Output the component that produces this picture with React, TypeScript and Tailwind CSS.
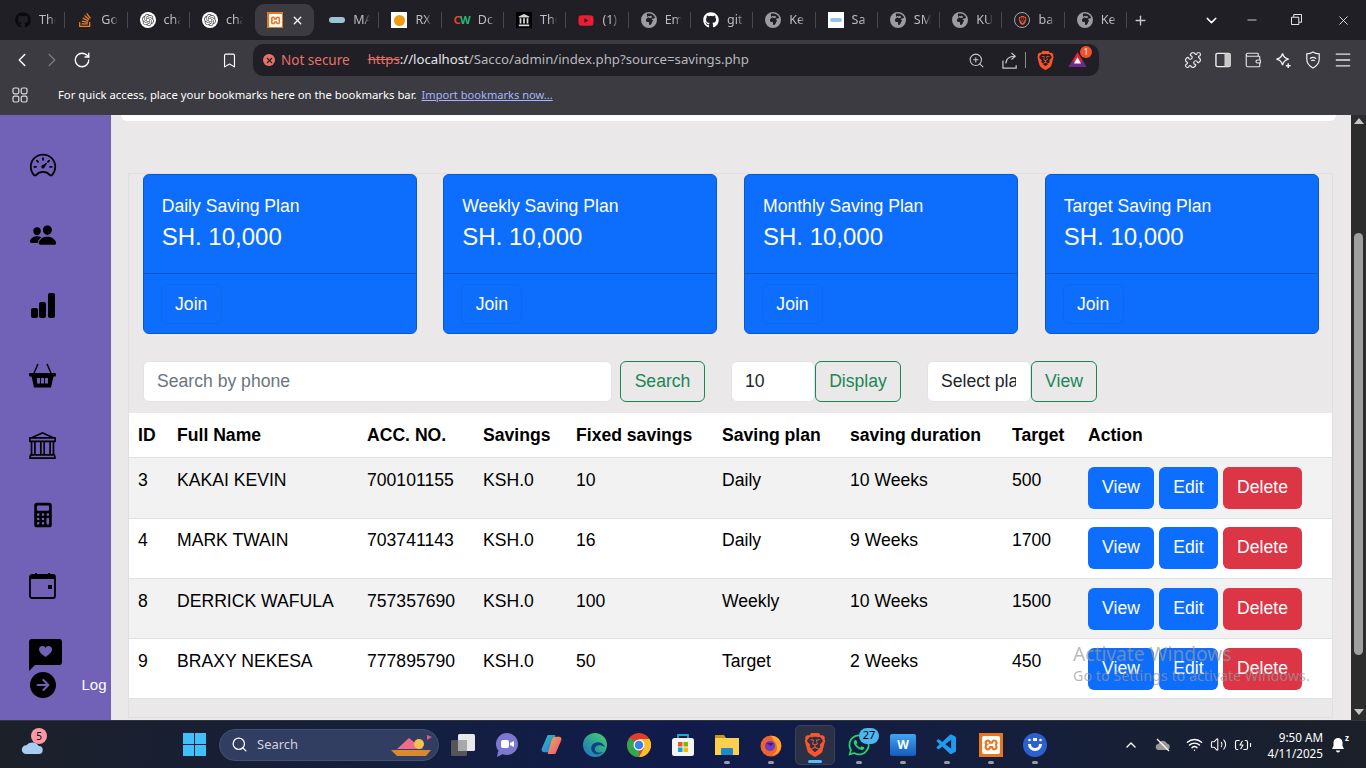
import React from "react";
import { ChevronLeft, ChevronRight, RotateCw, Bookmark, ZoomIn, Puzzle, Wallet, Menu, Plus, X, ChevronDown, Minus, Search, ChevronUp, Wifi, Volume2, BatteryCharging } from "lucide-react";
import { FaGithub, FaStackOverflow, FaYoutube, FaWhatsapp } from "react-icons/fa";
import { FaEarthAfrica } from "react-icons/fa6";
import { SiOpenai, SiBrave, SiXampp } from "react-icons/si";
import { VscVscode } from "react-icons/vsc";
import { IoSpeedometerOutline, IoPeople, IoCalculator, IoArrowForwardCircle } from "react-icons/io5";
import { BsBank } from "react-icons/bs";

const xamppTile = (
  <span className="flex h-4 w-4 items-center justify-center bg-[#e8761f] text-white"><SiXampp size={13} /></span>
);
const globe = <FaEarthAfrica size={16} className="text-[#9b9ba0]" />;

const tabs: { icon: React.ReactNode; label: string; active?: boolean }[] = [
  { icon: <FaGithub size={16} className="text-[#0b0b0d]" />, label: "The" },
  { icon: <FaStackOverflow size={16} className="text-[#f48024]" />, label: "Go" },
  { icon: <span className="flex h-4 w-4 items-center justify-center rounded-full bg-white text-[#555]"><SiOpenai size={12} /></span>, label: "cha" },
  { icon: <span className="flex h-4 w-4 items-center justify-center rounded-full bg-white text-[#555]"><SiOpenai size={12} /></span>, label: "cha" },
  { icon: xamppTile, label: "", active: true },
  { icon: <span className="h-[6px] w-4 rounded-sm bg-[#9cc3d6]" />, label: "MA" },
  { icon: <span className="flex h-4 w-4 items-center justify-center bg-white"><span className="h-[11px] w-[11px] rounded-full bg-[#ee9a12]" /></span>, label: "RX" },
  { icon: <span className="text-[11px] font-bold tracking-tighter"><span className="text-[#f0431f]">C</span><span className="text-[#25b872]">W</span></span>, label: "Dc" },
  {
    icon: (
      <span className="flex h-4 w-4 items-center justify-center bg-black">
        <svg viewBox="0 0 16 16" className="h-[14px] w-[14px]" fill="#d8d8d8"><path d="M8 1 14 4v1H2V4zM3 6h2v6H3zM7 6h2v6H7zM11 6h2v6h-2zM2 13h12v2H2z" /></svg>
      </span>
    ),
    label: "The",
  },
  { icon: <FaYoutube size={17} className="text-[#ee1c33]" />, label: "(1)" },
  { icon: globe, label: "Em" },
  { icon: <FaGithub size={16} className="text-white" />, label: "git" },
  { icon: globe, label: "Ke" },
  { icon: <span className="flex h-4 w-4 items-center justify-center bg-white"><span className="h-[4px] w-[12px] rounded-sm bg-[#9ec1e8]" /></span>, label: "Sa" },
  { icon: globe, label: "SM" },
  { icon: globe, label: "KU" },
  { icon: <span className="flex h-4 w-4 items-center justify-center rounded-full border border-[#aaa] text-[#e8553a]"><SiBrave size={9} /></span>, label: "ba" },
  { icon: globe, label: "Ke" },
];

function TabStrip() {
  return (
    <div className="flex h-[40px] items-start bg-[#1f1f25] pl-[3px] pt-[4px]">
      {tabs.map((t, i) =>
        t.active ? (
          <div key={i} className="mx-[3px] flex h-[32px] w-[59px] shrink-0 items-center rounded-[9px] bg-[#3b3b41] pl-[12px]">
            {t.icon}
            <X size={13} strokeWidth={2.4} className="ml-[8px] text-white" />
          </div>
        ) : (
          <div key={i} className="flex h-[32px] w-[62.3px] shrink-0 items-center pl-[12px] text-[12.5px] text-[#bdbdc1]">
            <span className="flex w-4 shrink-0 justify-center">{t.icon}</span>
            <span className="ml-[8px] w-[17px] overflow-hidden whitespace-nowrap [mask-image:linear-gradient(to_right,black_60%,transparent)]">{t.label}</span>
            <span className={i === 3 || i === 4 ? "hidden" : "ml-auto h-4 w-px bg-[#47474d]"} />
          </div>
        )
      )}
      <Plus size={15} strokeWidth={2.2} className="ml-[6px] mt-[9px] shrink-0 text-[#c8c8cc]" />
      <ChevronDown size={17} className="ml-[55px] mt-[8px] shrink-0 text-white" />
      <Minus size={14} strokeWidth={1.3} className="ml-[25px] mt-[9px] shrink-0 text-white" />
      <svg viewBox="0 0 12 12" className="ml-[32px] mt-[10px] h-[11px] w-[11px] shrink-0" fill="none" stroke="white"><path d="M.5 3.5h8v8h-8zM3 3V.5h8.5V9H9" /></svg>
      <X size={15} strokeWidth={1.3} className="ml-[34px] mt-[9px] shrink-0 text-white" />
    </div>
  );
}

function Toolbar() {
  return (
    <div className="flex h-[40px] items-center bg-[#3b3b41] text-[#e6e6e8]">
      <ChevronLeft size={22} strokeWidth={1.6} className="ml-[11px] text-white" />
      <ChevronRight size={22} strokeWidth={1.6} className="ml-[8px] text-[#77777c]" />
      <RotateCw size={18} strokeWidth={1.8} className="ml-[10px] text-white" />
      <Bookmark size={17} strokeWidth={1.6} className="ml-[130px] text-white" />
      <div className="ml-[15px] flex h-[32px] w-[846px] items-center rounded-[10px] bg-[#1f1f25] pl-[10px] pr-[12px] font-['Noto_Sans',sans-serif] text-[13.2px]">
        <span className="flex h-3 w-3 items-center justify-center rounded-full bg-[#e8716a] text-[#1f1f25]"><X size={9} strokeWidth={3} /></span>
        <span className="ml-[6px] text-[13.5px] text-[#e8716a]">Not secure</span>
        <span className="ml-[18px] text-[#e8716a] line-through">https</span>
        <span className="text-[#e6e6e8]">://localhost</span>
        <span className="text-[#b9b9bd]">/Sacco/admin/index.php?source=savings.php</span>
        <ZoomIn size={17} strokeWidth={1.5} className="ml-auto text-[#c9c9cc]" />
        <svg viewBox="0 0 18 18" className="ml-[17px] h-[17px] w-[17px] text-[#c9c9cc]" fill="none" stroke="currentColor" strokeWidth="1.3"><path d="M1 9v8h14v-3M4 12c.5-5 4-7.500 9-7.500M10 1l4 3.500L10 8" /></svg>
        <span className="ml-[6px] h-4 w-px bg-[#8c8c90]" />
        <SiBrave size={19} className="ml-[10px] text-[#fb542b]" />
        <span className="relative ml-[13px] flex">
          <svg viewBox="0 0 20 18" className="h-[16px] w-[19px]"><path d="M10 0 20 17H0z" fill="#e0243f" /><path d="M0 17 4 10 10 13 16 10 20 17z" fill="#6b2a8c" /><path d="M10 6l4 7H6z" fill="white" /></svg>
          <span className="absolute -right-[5px] -top-[6px] flex h-[12px] w-[12px] items-center justify-center rounded-full bg-[#f4502a] text-[8px] text-white">1</span>
        </span>
      </div>
      <Puzzle size={18} strokeWidth={1.6} className="ml-[85px]" />
      <svg viewBox="0 0 18 16" className="ml-[13px] h-[16px] w-[17px]" fill="none"><rect x="1" y="1" width="15" height="14" rx="1.5" stroke="#eee" strokeWidth="1.5" /><rect x="10" y="1" width="6" height="14" fill="#c8c8c8" /></svg>
      <Wallet size={18} strokeWidth={1.5} className="ml-[12px]" />
      <svg viewBox="0 0 18 18" className="ml-[13px] h-[17px] w-[17px]" fill="none" stroke="#eee" strokeWidth="1.5"><path d="M8 1.5c.8 3.6 2.6 5.4 6.5 6-3.9.7-5.7 2.5-6.5 6.5-.8-4-2.6-5.8-6.5-6.5C5.400 6.900 7.200 5.100 8 1.500zM14 12v5M11.500 14.500h5" /></svg>
      <svg viewBox="0 0 18 20" className="ml-[13px] h-[18px] w-[16px]" fill="none" stroke="#eee" strokeWidth="1.4"><path d="M9 1c2 1.400 4.500 2 7 2v6c0 4.500-3 8-7 10-4-2-7-5.500-7-10V3c2.500 0 5-.6 7-2z" /><path d="M5.500 8.500c2-1.700 5-1.700 7 0M7 11c1.200-1 2.800-1 4 0" /></svg>
      <Menu size={20} strokeWidth={1.6} className="ml-[12px]" />
    </div>
  );
}

function BookmarksBar() {
  return (
    <div className="flex h-[35px] items-center bg-[#3b3b41] pb-[5px] font-['Noto_Sans',sans-serif] text-[11.3px] text-white">
      <svg viewBox="0 0 16 16" className="ml-[12px] h-[16px] w-[16px]" fill="none" stroke="#dedede" strokeWidth="1.2"><rect x="1" y="1" width="5.800" height="5.800" rx="1.500" /><rect x="9.200" y="1" width="5.800" height="5.800" rx="1.500" /><rect x="1" y="9.200" width="5.800" height="5.800" rx="1.500" /><rect x="9.200" y="9.200" width="5.800" height="5.800" rx="1.500" /></svg>
      <span className="ml-[30px]">For quick access, place your bookmarks here on the bookmarks bar.</span>
      <span className="ml-[5px] text-[11.100px] text-[#a9b3ff] underline">Import bookmarks now...</span>
    </div>
  );
}

function Sidebar() {
  const icon = "h-[70px] flex items-center shrink-0";
  return (
    <div className="relative flex w-[111px] shrink-0 flex-col overflow-hidden bg-[#7161b7] pl-[29px] pt-[15px] text-black">
      <div className={icon}><IoSpeedometerOutline size={28} /></div>
      <div className={icon}><IoPeople size={28} /></div>
      <div className={icon}>
        <svg viewBox="0 0 27 25" className="h-[25px] w-[27px]" fill="black"><rect x="2" y="15" width="7" height="10" rx="2" /><rect x="10" y="9" width="7" height="16" rx="2" /><rect x="19" y="0" width="7" height="25" rx="2" /></svg>
      </div>
      <div className={icon}>
        <svg viewBox="0 0 27 25" className="h-[25px] w-[27px]"><path d="M5 10 9 1M22 10 18 1" stroke="black" strokeWidth="1.500" fill="none" /><rect x="0" y="10" width="27" height="3.400" rx="1" fill="black" /><path d="M2.500 13h22L22 24.500H5z" fill="black" /><path d="M8 15h3v5.500H8zM12 15h3v5.500h-3zM16 15h3v5.500h-3z" fill="#7161b7" /></svg>
      </div>
      <div className={icon}><BsBank size={27} /></div>
      <div className={icon}><IoCalculator size={28} /></div>
      <div className={icon}>
        <svg viewBox="0 0 27 27" className="h-[27px] w-[27px]" fill="none"><rect x="1" y="3" width="25" height="23" rx="2" stroke="black" strokeWidth="1.800" /><path d="M1 3h25v4H1zM6 1h2v3H6zM19 1h2v3h-2zM19 13h4v4h-4z" fill="black" /></svg>
      </div>
      <div className="flex h-[51px] shrink-0 items-start pt-[19px]">
        <svg viewBox="0 0 33 32" className="h-[32px] w-[33px]"><path d="M3 0h27a3 3 0 0 1 3 3v20a3 3 0 0 1-3 3H6l-6 6V3a3 3 0 0 1 3-3z" fill="black" /><path d="M16.500 18c-4-3-6.500-5-6.500-7.600C10 8.400 11.500 7 13.300 7c1.300 0 2.500.7 3.200 1.900.7-1.200 1.900-1.900 3.200-1.900C21.500 7 23 8.400 23 10.400c0 2.600-2.500 4.600-6.500 7.600z" fill="#7161b7" /></svg>
      </div>
      <div className="-mt-[2px] flex items-center">
        <IoArrowForwardCircle size={32} className="-ml-[2.500px] shrink-0" />
        <span className="ml-[23px] font-['Liberation_Sans',sans-serif] text-[15px] text-white">Log</span>
      </div>
    </div>
  );
}

const plans = ["Daily Saving Plan", "Weekly Saving Plan", "Monthly Saving Plan", "Target Saving Plan"];

function PlanCard({ title }: { title: string }) {
  return (
    <div className="flex h-[160px] flex-col rounded-[6px] border border-[#0a58ca] bg-[#0d6efd] text-white">
      <div className="h-[99px] border-b border-[#0a58ca] pl-[18px] pt-[18px]">
        <div className="text-[17.6px] leading-[26px]">{title}</div>
        <div className="mt-[3px] text-[24px] leading-[30px]">SH. 10,000</div>
      </div>
      <div className="pl-[17px] pt-[10px]">
        <button className="h-[40px] w-[61px] rounded-[6px] border border-[#0c68ee] bg-[#0d6efd] text-[17.6px]">Join</button>
      </div>
    </div>
  );
}

const outlineBtn = "h-[41px] rounded-[6px] border border-[#198754] text-[17.6px] text-[#198754]";
const inputBox = "flex h-[41px] items-center overflow-hidden whitespace-nowrap rounded-[6px] border border-[#e4e4e8] bg-white text-[17.6px]";

function Filters() {
  return (
    <div className="ml-[14px] mt-[27px] flex">
      <div className={`${inputBox} w-[469px] pl-[13px] text-[#6c757d]`}>Search by phone</div>
      <button className={`${outlineBtn} ml-[8px] w-[85px]`}>Search</button>
      <div className={`${inputBox} ml-[26px] w-[84px] pl-[13px] text-[#212529]`}>10</div>
      <button className={`${outlineBtn} w-[86px]`}>Display</button>
      <div className={`${inputBox} ml-[26px] w-[104px] pl-[13px] text-[#212529]`}><span className="w-[75px] overflow-hidden">Select plan</span></div>
      <button className={`${outlineBtn} w-[66px]`}>View</button>
    </div>
  );
}

const rows = [
  ["3", "KAKAI KEVIN", "700101155", "KSH.0", "10", "Daily", "10 Weeks", "500"],
  ["4", "MARK TWAIN", "703741143", "KSH.0", "16", "Daily", "9 Weeks", "1700"],
  ["8", "DERRICK WAFULA", "757357690", "KSH.0", "100", "Weekly", "10 Weeks", "1500"],
  ["9", "BRAXY NEKESA", "777895790", "KSH.0", "50", "Target", "2 Weeks", "450"],
];
const headers = ["ID", "Full Name", "ACC. NO.", "Savings", "Fixed savings", "Saving plan", "saving duration", "Target", "Action"];
const colWidths = ["w-[39px]", "w-[190px]", "w-[116px]", "w-[93px]", "w-[146px]", "w-[128px]", "w-[162px]", "w-[76px]", "w-[253px]"];

function DataTable() {
  return (
    <table className="mt-[11px] w-[1203px] table-fixed border-collapse text-[17.6px] text-black">
      <colgroup>
        {colWidths.map((w, i) => <col key={i} className={w} />)}
      </colgroup>
      <thead>
        <tr className="h-[44px] border-b border-[#dee2e6] bg-white">
          {headers.map((h) => <th key={h} className="pl-[9px] text-left font-bold">{h}</th>)}
        </tr>
      </thead>
      <tbody>
        {rows.map((r, i) => {
          // the page was zoomed, so row tops land on uneven pixels
          const pad = i === 1 ? "pt-[8px]" : "pt-[9px]";
          return (
            <tr key={r[0]} className={`${i === 0 ? "h-[61px]" : "h-[60px]"} border-b border-[#dee2e6] ${i % 2 === 0 ? "bg-[#f2f2f2]" : "bg-white"}`}>
              {r.map((c, j) => <td key={j} className={`whitespace-nowrap pl-[9px] ${pad} align-top leading-[26px]`}>{c}</td>)}
              <td className={`pl-[9px] ${pad} align-top`}>
                <div className="flex gap-[5px] text-white">
                  <button className="h-[42px] w-[66px] rounded-[6px] bg-[#0d6efd]">View</button>
                  <button className="h-[42px] w-[59px] rounded-[6px] bg-[#0d6efd]">Edit</button>
                  <button className="h-[42px] w-[79px] rounded-[6px] bg-[#dc3545]">Delete</button>
                </div>
              </td>
            </tr>
          );
        })}
      </tbody>
    </table>
  );
}

function ScrollBar() {
  return (
    <div className="flex w-[15px] shrink-0 flex-col items-center bg-[#2c2c2c] pt-[3px]">
      <span className="h-0 w-0 border-x-[5px] border-b-[6px] border-x-transparent border-b-[#c4c4c4]" />
      <span className="mt-[109px] h-[422px] w-[9px] rounded-[5px] bg-[#9f9f9f]" />
      <span className="mt-[54px] h-0 w-0 border-x-[5px] border-t-[6px] border-x-transparent border-t-[#c4c4c4]" />
    </div>
  );
}

function Main() {
  return (
    <div className="relative min-w-0 flex-1 overflow-hidden bg-[#eae8e9] font-['Liberation_Sans',sans-serif]">
      <div className="ml-[10px] h-[6px] w-[1215px] rounded-b-[14px] bg-white" />
      <div className="ml-[17px] mt-[52px] h-[545px] w-[1205px] border border-[#e0e0e4]">
        <div className="ml-[13.7px] grid w-[1176px] grid-cols-4 gap-[26.6px]">
          {plans.map((p) => <PlanCard key={p} title={p} />)}
        </div>
        <Filters />
        <DataTable />
      </div>
      <div className="absolute left-[962px] top-[526px] font-['Noto_Sans',sans-serif] text-[#9a9a9a]/70">
        <div className="text-[19.2px] leading-[26px]">Activate Windows</div>
        <div className="-mt-[1px] text-[14.300px] leading-[20px]">Go to Settings to activate Windows.</div>
      </div>
    </div>
  );
}

function TaskIcon({ children, active, dot }: { children: React.ReactNode; active?: boolean; dot?: boolean }) {
  return (
    <div className={`relative flex h-[40px] w-[40px] shrink-0 items-center justify-center rounded-[5px] ${active ? "border border-[#3a4055] bg-[#2a3045]" : ""}`}>
      {children}
      {dot && <span className="absolute bottom-[1px] h-[3px] w-[6px] rounded-full bg-[#9a9aa0]" />}
      {active && <span className="absolute bottom-[1px] h-[3px] w-[14px] rounded-full bg-[#4cc2ff]" />}
    </div>
  );
}

function Taskbar() {
  return (
    <div className="flex h-[48px] items-center border-t border-[#33363e] bg-gradient-to-r from-[#1c2029] via-[#101b4c] to-[#1b2029] font-['Noto_Sans',sans-serif] text-white">
      <div className="relative ml-[20px] flex w-[25px] shrink-0">
        <svg viewBox="0 0 26 18" className="mt-[5px] h-[16px] w-[25px]"><path d="M6 17a5 5 0 0 1 0-10 8 7 0 0 1 14 1 4.500 4.500 0 0 1 0 9z" fill="#a9cdf2" /></svg>
        <span className="absolute -top-[6px] left-[11px] flex h-4 w-4 items-center justify-center rounded-full bg-[#ff98a4] text-[10px] text-black">5</span>
      </div>
      <svg viewBox="0 0 24 24" className="ml-[138px] h-[23px] w-[23px] shrink-0"><path d="M0 0h11.500v11.500H0zM12.500 0H24v11.500H12.500zM0 12.500h11.500V24H0zM12.500 12.500H24V24H12.500z" fill="#3fc0fb" /></svg>
      <div className="ml-[13px] flex h-[32px] w-[220px] shrink-0 items-center rounded-full border border-[#45506f] bg-[#323d62] pl-[11px] text-[13px] text-[#cfd3de]">
        <Search size={17} strokeWidth={1.8} className="text-white" />
        <span className="ml-[9px]">Search</span>
        <svg viewBox="0 0 44 24" className="ml-auto mr-[5px] h-[24px] w-[44px]"><path d="M2 17h40l-5 6H8z" fill="#d98a2e" /><path d="M8 16 20 5l6 5 8 6z" fill="#f06a8a" /><circle cx="30" cy="11" r="5" fill="#f4c14e" /><path d="M38 2l5 2-5 3z" fill="#e0569b" /></svg>
      </div>
      <div className="ml-[4px] flex gap-[4px]">
        <TaskIcon>
          <svg viewBox="0 0 24 24" className="h-[24px] w-[24px]"><rect x="0" y="7" width="16" height="16" rx="1.500" fill="#55555a" /><rect x="7" y="1" width="17" height="17" rx="1.500" fill="#e8e8ea" /><rect x="7" y="7" width="9" height="11" fill="#a8a8ac" /></svg>
        </TaskIcon>
        <TaskIcon>
          <svg viewBox="0 0 24 24" className="h-[24px] w-[24px]"><circle cx="12" cy="11" r="11" fill="#7b79cf" /><path d="M3 18 2 24l6-3z" fill="#7b79cf" /><rect x="6" y="7" width="8" height="8" rx="2" fill="white" /><path d="M15 10l4-2v6l-4-2z" fill="white" /></svg>
        </TaskIcon>
        <TaskIcon>
          <svg viewBox="0 0 24 24" className="h-[23px] w-[23px]"><defs><linearGradient id="cp1" x1="0" y1="0" x2="1" y2="1"><stop offset="0" stopColor="#2bc4a8" /><stop offset="1" stopColor="#3a6ee8" /></linearGradient><linearGradient id="cp2" x1="0" y1="0" x2="1" y2="1"><stop offset="0" stopColor="#f0b43c" /><stop offset="1" stopColor="#e84a90" /></linearGradient></defs><path d="M8 2h8l-4 14c-.5 2-2 4-4 4H4c-2 0-3-2-2-4z" fill="url(#cp1)" /><path d="M16 22H8l4-14c.5-2 2-4 4-4h4c2 0 3 2 2 4z" fill="url(#cp2)" /></svg>
        </TaskIcon>
        <TaskIcon>
          <svg viewBox="0 0 24 24" className="h-[24px] w-[24px]"><defs><linearGradient id="eg" x1="0" y1="1" x2="1" y2="0"><stop offset="0" stopColor="#1a6fc0" /><stop offset="1" stopColor="#46d46b" /></linearGradient></defs><circle cx="12" cy="12" r="12" fill="url(#eg)" /><path d="M22 14c-2-5-8-6-12-3-3 3-2 8 2 10 3 1 6 0 8-2-6 2-9-1-8-4 1-3 5-4 10-1z" fill="#0f3f86" /></svg>
        </TaskIcon>
        <TaskIcon>
          <svg viewBox="0 0 24 24" className="h-[24px] w-[24px]"><circle cx="12" cy="12" r="12" fill="#e33b2e" /><path d="M12 12 1.600 18A12 12 0 0 1 3 5z" fill="#2da94f" /><path d="M12 12 1.600 18A12 12 0 0 0 12 24z" fill="#2da94f" /><path d="M12 6h10.400A12 12 0 0 1 12 24l5-9z" fill="#fbc02d" /><circle cx="12" cy="12" r="5.500" fill="white" /><circle cx="12" cy="12" r="4.300" fill="#3f7fe8" /></svg>
        </TaskIcon>
        <TaskIcon>
          <svg viewBox="0 0 24 24" className="h-[24px] w-[24px]"><path d="M7 6V2h10v4" fill="none" stroke="#2aa5d8" strokeWidth="1.800" /><rect x="1" y="5" width="22" height="18" rx="2.500" fill="#f4f4f4" /><rect x="7" y="9" width="4.500" height="4.500" fill="#f25022" /><rect x="12.500" y="9" width="4.500" height="4.500" fill="#7fba00" /><rect x="7" y="14.500" width="4.500" height="4.500" fill="#00a4ef" /><rect x="12.500" y="14.500" width="4.500" height="4.500" fill="#ffb900" /></svg>
        </TaskIcon>
        <TaskIcon dot>
          <svg viewBox="0 0 24 24" className="h-[24px] w-[24px]"><path d="M0 2h9l2 3H0z" fill="#c99415" /><rect x="0" y="5" width="24" height="17" fill="#fbd04e" /><rect x="6" y="15" width="12" height="7" rx="1" fill="#1e88c8" /></svg>
        </TaskIcon>
        <TaskIcon dot>
          <svg viewBox="0 0 24 24" className="h-[24px] w-[24px]"><circle cx="12" cy="13" r="10.500" fill="#f0642c" /><path d="M12 3c6-1 11 5 10 11-1 5-5 8-9 8 5-2 6-7 4-11-1-2-3-5-5-8z" fill="#ffa92e" /><circle cx="11" cy="13" r="5" fill="#6d3bbf" /><path d="M7 10h8l-3 3z" fill="#3e1d8a" /></svg>
        </TaskIcon>
        <TaskIcon active><SiBrave size={24} className="text-[#f8552c]" /></TaskIcon>
        <TaskIcon dot>
          <FaWhatsapp size={24} className="text-[#25d366]" />
          <span className="absolute left-[20px] top-[3px] flex h-[16px] w-[20px] items-center justify-center rounded-full bg-[#4db8f0] text-[11px] text-black">27</span>
        </TaskIcon>
        <TaskIcon dot>
          <span className="flex h-[22px] w-[26px] items-center justify-center rounded-[2px] bg-gradient-to-b from-[#41a5ee] to-[#185abd] text-[12px] font-bold text-white">W</span>
        </TaskIcon>
        <TaskIcon dot><VscVscode size={24} className="text-[#1f9cf0]" /></TaskIcon>
        <TaskIcon dot>
          <span className="flex h-[24px] w-[24px] items-center justify-center bg-[#e8761f] text-white"><SiXampp size={18} /></span>
        </TaskIcon>
        <TaskIcon dot>
          <svg viewBox="0 0 24 24" className="h-[24px] w-[24px]"><circle cx="12" cy="12" r="12" fill="#2c5fd0" /><path d="M5 11a7 7 0 0 0 14 0h-3a4 4 0 0 1-8 0z" fill="white" /><circle cx="6.500" cy="7" r="1.300" fill="white" /><circle cx="17.500" cy="7" r="1.300" fill="white" /><path d="M10 5h4v3h-4z" fill="white" /></svg>
        </TaskIcon>
      </div>
      <ChevronUp size={16} className="ml-[68px] shrink-0" />
      <svg viewBox="0 0 16 16" className="ml-[16px] h-[16px] w-[16px] shrink-0"><path d="M4 13a3 3 0 0 1-.5-6 4.500 4.500 0 0 1 8.500-.5A3.300 3.300 0 0 1 12 13z" fill="#9a9a9a" /><path d="M2 2l12 12" stroke="white" strokeWidth="1.200" /></svg>
      <Wifi size={17} className="ml-[15px] shrink-0" />
      <Volume2 size={17} strokeWidth={1.5} className="ml-[7px] shrink-0" />
      <BatteryCharging size={18} strokeWidth={1.5} className="ml-[7px] shrink-0" />
      <div className="ml-[11px] w-[60px] shrink-0 text-right text-[11.700px] leading-[16px]">
        <div>9:50 AM</div>
        <div>4/11/2025</div>
      </div>
      <span className="relative ml-[7px] flex shrink-0">
        <svg viewBox="0 0 16 16" className="h-[16px] w-[16px]" fill="white"><path d="M8 1a4.500 4.500 0 0 0-4.500 4.500V9L2 12h12l-1.500-3V5.500A4.500 4.500 0 0 0 8 1zM6 13.500h4a2 2 0 0 1-4 0z" /></svg>
        <span className="absolute -right-[3px] -top-[4px] text-[8px] font-bold leading-[10px]">z</span>
      </span>
    </div>
  );
}

export default function App() {
  return (
    <div className="flex h-[768px] w-[1366px] flex-col overflow-hidden font-['Noto_Sans',sans-serif]">
      <TabStrip />
      <Toolbar />
      <BookmarksBar />
      <div className="flex min-h-0 flex-1">
        <Sidebar />
        <Main />
        <ScrollBar />
      </div>
      <Taskbar />
    </div>
  );
}
